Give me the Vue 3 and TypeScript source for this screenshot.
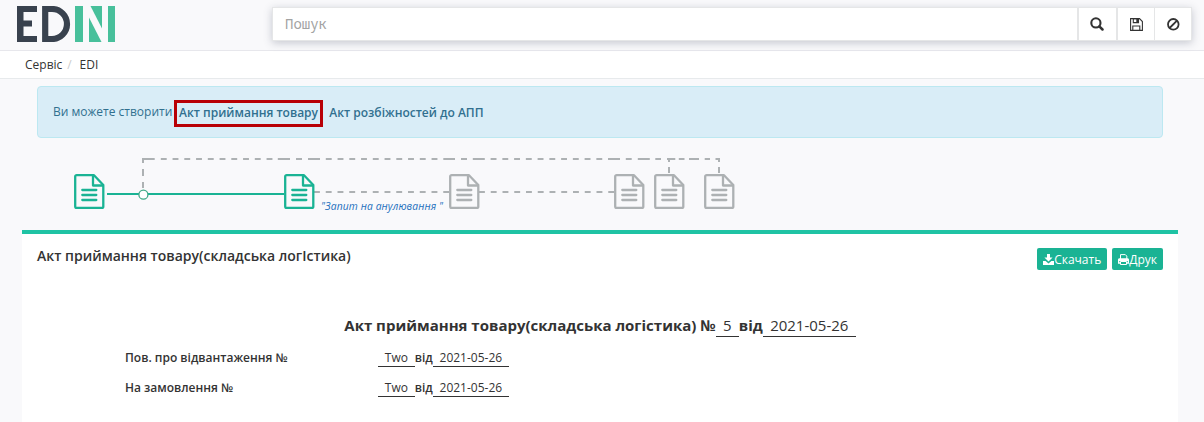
<script setup lang="ts">
interface Dash { from: number; to: number }
interface DocNode { x: number; active: boolean }

const docs: DocNode[] = [
  { x: 74, active: true },
  { x: 284, active: true },
  { x: 449, active: false },
  { x: 614, active: false },
  { x: 654, active: false },
  { x: 704, active: false },
]

const run = (start: number, count: number): Dash[] =>
  Array.from({ length: count }, (_, i) => ({ from: start + i * 11.75, to: start + i * 11.75 + 5.9 }))

const bypass: Dash[] = [
  { from: 142.5, to: 154.7 },
  ...run(160.8, 10),
  { from: 277.8, to: 290 },
  { from: 296, to: 302 },
  { from: 308, to: 320 },
  ...run(325.8, 10),
  { from: 443.3, to: 455 },
  { from: 461, to: 467 },
  { from: 472.8, to: 484.8 },
  ...run(490.6, 10),
  { from: 608, to: 620 },
  { from: 625.8, to: 631.7 },
  { from: 637.8, to: 649.8 },
  { from: 655.3, to: 661 },
  { from: 667, to: 675.3 },
  { from: 678.8, to: 684.5 },
  { from: 689, to: 699 },
  { from: 704.7, to: 710 },
  { from: 715.5, to: 720 },
]

const middle: Dash[] = [...run(314, 12), ...run(479, 12)]

const references = [
  { label: 'Пов. про відвантаження №', number: 'Two', date: '2021-05-26' },
  { label: 'На замовлення №', number: 'Two', date: '2021-05-26' },
]
</script>

<template>
  <div class="page">
    <header class="top">
      <svg class="logo" width="98" height="36" viewBox="0 0 98 36" aria-label="EDIN">
        <g fill="#39424e">
          <rect width="6.5" height="36" />
          <rect width="20" height="6" />
          <rect y="14.5" width="15" height="6" />
          <rect y="30" width="20" height="6" />
        </g>
        <path d="M28.2 3H35a15 15 0 0 1 0 30h-6.8z" fill="none" stroke="#39424e" stroke-width="6.2" />
        <g fill="#48c09b">
          <rect x="58" width="8" height="36" />
          <path d="M72 11.500L84.500 36H72z" />
          <path d="M73.500 0H85v22.500z" />
          <rect x="91" width="7" height="36" />
        </g>
      </svg>
      <div class="search">
        <input type="text" placeholder="Пошук" />
        <button type="button" class="b1">
          <svg width="14" height="14" viewBox="0 0 14 14">
            <circle cx="5.900" cy="5.900" r="4.600" fill="none" stroke="#333" stroke-width="2.100" />
            <path d="M9.300 9.300l3.200 3.200" stroke="#333" stroke-width="2.500" stroke-linecap="round" />
          </svg>
        </button>
        <button type="button" class="b2">
          <svg width="13" height="13" viewBox="0 0 13 13" fill="none" stroke="#333" stroke-width="1.100">
            <path d="M.6.6h8.900l2.900 2.900v8.900H.6zM2.800 12.400V8h7v4.400" />
            <path d="M3.300.6h5.200v4H3.300z" />
            <path d="M6.300 1h1.800v3H6.300z" fill="#333" stroke="none" />
          </svg>
        </button>
        <button type="button" class="b3">
          <svg width="13" height="13" viewBox="0 0 13 13" fill="none" stroke="#333" stroke-width="1.800">
            <circle cx="6.300" cy="6.300" r="5.300" />
            <path d="M2.600 10l7.400-7.400" />
          </svg>
        </button>
      </div>
    </header>

    <nav class="crumbs"><span>Сервіс</span><i>/</i><span>EDI</span></nav>

    <div class="alert">
      <span class="lead">Ви можете створити</span>
      <a class="marked">Акт приймання товару</a>
      <a class="second">Акт розбіжностей до АПП</a>
    </div>

    <svg class="chain" width="1204" height="92" viewBox="0 138 1204 92">
      <defs>
        <g id="doc" fill="none" stroke-width="2.300" stroke-linejoin="round">
          <path d="M2.600 1.200h17.400l9.300 9.800v21.400a1.500 1.500 0 0 1-1.500 1.500H2.600a1.400 1.400 0 0 1-1.400-1.400V2.600a1.400 1.400 0 0 1 1.400-1.400z" />
          <path d="M19 1.200v10.300h10.300" />
          <path d="M8.300 16h14M8.300 21h14M8.300 26h14" stroke-linecap="round" />
        </g>
      </defs>
      <g stroke="#adb1b3" stroke-width="2">
        <line v-for="d in bypass" :key="'b' + d.from" :x1="d.from" :x2="d.to" y1="159" y2="159" />
        <line v-for="d in middle" :key="'m' + d.from" :x1="d.from" :x2="d.to" y1="192" y2="192" />
        <path d="M143 158v5M143 169v7M143 182v6M669 158v4M669 167v6M719 158v4M719 167v6" />
      </g>
      <path d="M107 194h32M148 194h136" stroke="#1ab394" stroke-width="2" />
      <circle cx="143.400" cy="194.700" r="4.500" fill="#fff" stroke="#3fa887" stroke-width="1.300" />
      <use
        v-for="doc in docs"
        :key="doc.x"
        href="#doc"
        :x="doc.x"
        y="174"
        :stroke="doc.active ? '#1ab394' : '#adb1b3'"
      />
      <text x="321" y="210" class="note" textLength="122">"Запит на анулювання "</text>
    </svg>

    <section class="panel">
      <div class="head">
        <h5>Акт приймання товару(складська логІстика)</h5>
        <div class="actions">
          <button type="button">
            <svg width="11" height="11" viewBox="0 0 11 11" fill="#fff">
              <path d="M4 0h3v3.500h2.600L5.500 7.600 1.400 3.500H4z" />
              <path d="M0 7h2.600l2.900 2.400L8.400 7H11v4H0z" />
            </svg><span>Скачать</span>
          </button>
          <button type="button">
            <svg width="11" height="11" viewBox="0 0 11 11" fill="none" stroke="#fff">
              <path d="M2.500 5V.6h4.800l1.500 1.500V5M2.500 7.500h6v3h-6z" />
              <path d="M2 9H.6V6q0-1 1-1h7.800q1 0 1 1v3H9" stroke-width="1.300" />
              <path d="M1 5h9v2H1z" fill="#fff" stroke="none" />
            </svg><span>Друк</span>
          </button>
        </div>
      </div>
      <div class="title">
        <b>Акт приймання товару(складська логістика) №</b><u>5</u><b>від</b><u>2021-05-26</u>
      </div>
      <div v-for="r in references" :key="r.label" class="row">
        <b class="label">{{ r.label }}</b><u>{{ r.number }}</u><b>від</b><u>{{ r.date }}</u>
      </div>
    </section>
  </div>
</template>

<style>
body {
  margin: 0;
  overflow: hidden;
}
</style>

<style scoped>
.page {
  width: 1204px;
  height: 422px;
  overflow: hidden;
  background: #f9f9fb;
  font: 12px/17px "Open Sans", "Noto Sans", sans-serif;
  color: #333;
}
.page * {
  box-sizing: border-box;
}
.top {
  height: 51px;
  display: flex;
  justify-content: space-between;
  align-items: flex-start;
  padding: 6px 12px 0 17px;
  border-bottom: 1px solid #e7e7ec;
}
.logo {
  display: block;
}
.search {
  display: flex;
  width: 920px;
  height: 34px;
  margin-top: 1px;
  background: #fff;
  border: 1px solid #e5e6e7;
  box-shadow: 0 2px 8px rgba(80, 85, 110, 0.3);
}
.search input {
  flex: 1;
  min-width: 0;
  border: 0;
  outline: 0;
  padding: 0 12px 2px;
  background: transparent;
  font: 14px "Noto Sans Mono", "DejaVu Sans Mono", monospace;
}
.search input::placeholder {
  color: #a3a3a3;
  opacity: 1;
}
.search button {
  display: flex;
  align-items: center;
  justify-content: center;
  padding: 0;
  border: 0 solid #e5e6e7;
  background: #fff;
}
.search .b1 {
  width: 39px;
  padding-right: 1px;
  border-left-width: 2px;
}
.search .b2 {
  width: 38px;
  border-left-width: 2px;
}
.search .b3 {
  width: 37px;
  border-left-width: 1px;
}
.crumbs {
  display: flex;
  height: 28px;
  padding: 5px 25px 0;
  background: #fff;
  border-bottom: 1px solid #e7eaec;
}
.crumbs i {
  width: 17.300px;
  padding-left: 5px;
  font-style: normal;
  color: #ccc;
}
.alert {
  display: flex;
  align-items: center;
  height: 52px;
  margin: 7px 41px 0 37px;
  padding-left: 15px;
  background: #d9edf7;
  border: 1px solid #bce8f1;
  border-radius: 4px;
  color: #31708f;
}
.alert .lead {
  width: 120.500px;
  padding-bottom: 2px;
  white-space: nowrap;
}
.alert a {
  font-weight: 600;
  white-space: nowrap;
}
.alert .marked {
  width: 149px;
  height: 27px;
  margin-top: 2px;
  padding: 0 0 0 2.600px;
  border: 3px solid #b80006;
  line-height: 19px;
}
.alert .second {
  margin: 1px 0 0 6.800px;
}
.chain {
  display: block;
}
.note {
  font: italic 500 10.300px "Open Sans", sans-serif;
  fill: #1c6fbd;
  white-space: pre;
}
.panel {
  height: 192px;
  margin: 0 26px 0 22px;
  padding: 14px 15px 0;
  background: #fff;
  border-top: 4px solid #1fc3a4;
}
.head {
  display: flex;
  justify-content: space-between;
}
h5 {
  margin: -1px 0 0;
  font-size: 14px;
  font-weight: 600;
}
.actions {
  display: flex;
  gap: 5px;
}
.actions button {
  display: flex;
  align-items: center;
  height: 22px;
  padding: 0 6px;
  border: 0;
  border-radius: 2px;
  background: #1ab394;
  color: #fff;
  font: 12px/20px "Open Sans", sans-serif;
}
.actions span {
  padding-top: 2px;
}
.title {
  display: flex;
  justify-content: center;
  height: 21px;
  margin-top: 46px;
  font-size: 15px;
  line-height: 18px;
}
.row {
  display: flex;
  height: 18px;
  margin: 12px 0 0 88px;
}
.row b {
  font-weight: 600;
}
.row .label {
  width: 253px;
}
u {
  padding: 0 6.800px;
  text-decoration: none;
  border-bottom: 1px solid #333;
}
.title u {
  padding: 0 7.300px;
}
</style>
